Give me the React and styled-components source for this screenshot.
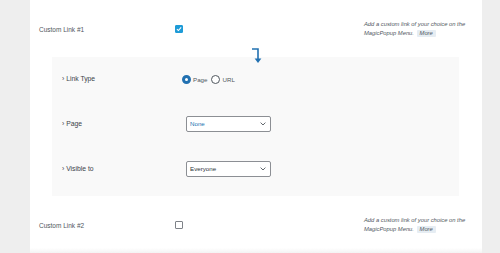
import React from 'react';
import styled, { createGlobalStyle } from 'styled-components';

const Global = createGlobalStyle`
	body {
		margin: 0;
		background: #eeeeee;
		font-family: 'Liberation Sans', Arial, sans-serif;
	}
`;

const App = () => {
	return (
		<>
			<Global />
			<Page>
				<Side />
				<Panel>
					<SettingRow>
						<Label>Custom Link #1</Label>
						<div>
							<Check checked>
								<svg width="6" height="6" viewBox="0 0 10 10">
									<path d="M1.5 5.2 L4 7.6 L8.6 2.2" fill="none" stroke="#fff" strokeWidth="1.8" />
								</svg>
							</Check>
						</div>
						<Desc>
							<div>Add a custom link of your choice on the</div>
							<div>
								MagicPopup Menu. <More>More</More>
							</div>
						</Desc>
					</SettingRow>
					<SubBox>
						<Arrow width="10" height="16" viewBox="0 0 10 16">
							<path d="M0 1 H6 V12" fill="none" stroke="#2271b1" strokeWidth="1.6" />
							<path d="M2.6 10.5 H9.4 L6 15 Z" fill="#2271b1" />
						</Arrow>
						<SubRow>
							<SubLabel>› Link Type</SubLabel>
							<Radios>
								<RadioItem>
									<Radio checked />
									Page
								</RadioItem>
								<RadioItem>
									<Radio />
									URL
								</RadioItem>
							</Radios>
						</SubRow>
						<SubRow>
							<SubLabel>› Page</SubLabel>
							<Select highlight>
								None
								<Chevron />
							</Select>
						</SubRow>
						<SubRow>
							<SubLabel>› Visible to</SubLabel>
							<Select>
								Everyone
								<Chevron />
							</Select>
						</SubRow>
					</SubBox>
					<SettingRow last>
						<Label>Custom Link #2</Label>
						<div>
							<Check />
						</div>
						<Desc>
							<div>Add a custom link of your choice on the</div>
							<div>
								MagicPopup Menu. <More>More</More>
							</div>
						</Desc>
					</SettingRow>
					<Fade />
				</Panel>
				<Side />
			</Page>
		</>
	);
};

const Chevron = () => (
	<svg width="6" height="4" viewBox="0 0 6 4">
		<path d="M0.6 0.6 L3 3 L5.4 0.6" fill="none" stroke="#50575e" strokeWidth="0.9" />
	</svg>
);

export default App;

const Page = styled.div`
	display: flex;
	width: 500px;
	height: 253px;
	overflow: hidden;
`;

const Side = styled.div`
	flex: 1;
	background: #eeeeee;
	&:first-child {
		flex: 0 0 30px;
	}
`;

const Panel = styled.div`
	flex: 0 0 452px;
	background: #ffffff;
	display: flex;
	flex-direction: column;
`;

const SettingRow = styled.div`
	display: grid;
	grid-template-columns: 136px 189px 1fr;
	align-items: center;
	padding-left: 9px;
	height: ${(p) => (p.last ? '52px' : '57px')};
	padding-top: ${(p) => (p.last ? '5px' : '0')};
	box-sizing: border-box;
`;

const Label = styled.div`
	font-size: 6.5px;
	color: #50575e;
	padding-top: 1px;
`;

const Check = styled.div`
	width: 8px;
	height: 8px;
	box-sizing: border-box;
	border-radius: 1px;
	border: 1px solid ${(p) => (p.checked ? '#1e9bd7' : '#7e8288')};
	background: ${(p) => (p.checked ? '#1e9bd7' : '#fff')};
	display: flex;
	align-items: center;
	justify-content: center;
`;

const Desc = styled.div`
	font-size: 5.8px;
	font-style: italic;
	color: #50575e;
	display: flex;
	flex-direction: column;
	gap: 2px;
	line-height: 7px;
	white-space: nowrap;
`;

const More = styled.span`
	display: inline-block;
	background: #e6edf3;
	padding: 0 3px;
	line-height: 7px;
	border-radius: 1px;
	color: #50575e;
	margin-left: 1px;
`;

const SubBox = styled.div`
	position: relative;
	margin-left: 22px;
	width: 407px;
	background: #f9f9f9;
	padding: 0 0 4px 10px;
	box-sizing: border-box;
`;

const Arrow = styled.svg`
	position: absolute;
	left: 200px;
	top: -9px;
`;

const SubRow = styled.div`
	display: grid;
	grid-template-columns: 120px 1fr;
	align-items: center;
	height: 45px;
	padding-bottom: 2px;
	box-sizing: border-box;
`;

const SubLabel = styled.div`
	font-size: 6.8px;
	color: #3c434a;
`;

const Radios = styled.div`
	display: flex;
	align-items: center;
	gap: 4px;
	font-size: 6.2px;
	color: #50575e;
	padding-top: 2px;
`;

const RadioItem = styled.label`
	display: flex;
	align-items: center;
	gap: 2px;
`;

const Radio = styled.span`
	display: inline-block;
	width: 9px;
	height: 9px;
	box-sizing: border-box;
	border-radius: 50%;
	border: ${(p) => (p.checked ? '3px solid #2271b1' : '1px solid #50575e')};
	background: #fff;
`;

const Select = styled.div`
	margin-left: 4px;
	width: 85px;
	height: 16px;
	box-sizing: border-box;
	border: 1px solid #8c8f94;
	border-radius: 2px;
	background: #fff;
	display: flex;
	align-items: center;
	justify-content: space-between;
	padding: 0 4px 0 3px;
	font-size: 6.2px;
	color: ${(p) => (p.highlight ? '#2271b1' : '#2c3338')};
`;

const Fade = styled.div`
	flex: 1;
	background: linear-gradient(#ffffff, #f3f3f3);
`;
